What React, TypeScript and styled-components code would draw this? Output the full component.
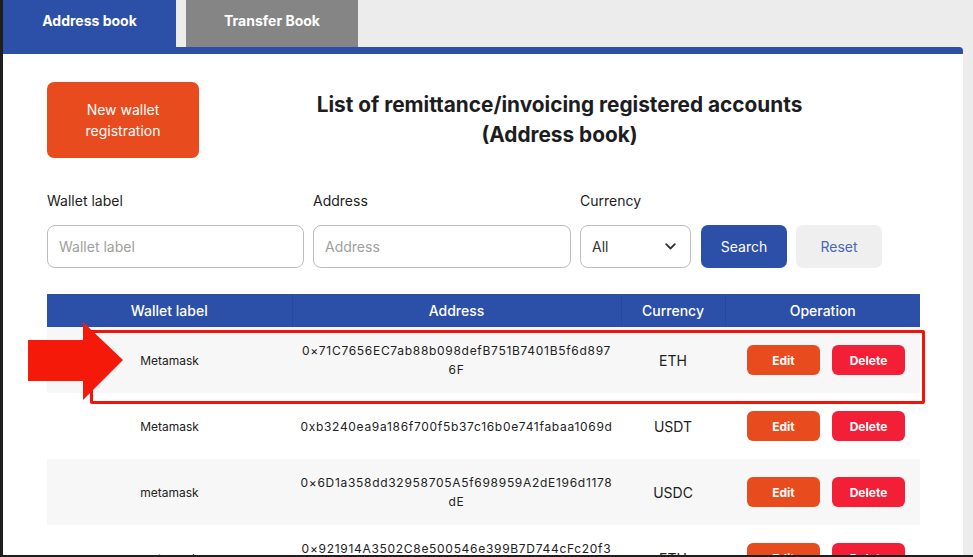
import React from "react";
import styled, { createGlobalStyle } from "styled-components";

const GlobalStyle = createGlobalStyle`
  html, body { margin: 0; padding: 0; background: #1e1e1e; }
  body { font-family: Inter, "Noto Sans", sans-serif; }
  * { box-sizing: border-box; }
`;

const Screen = styled.div`
  position: relative;
  margin-left: 3px;
  width: 970px;
  height: 555px;
  overflow: hidden;
  background: #ececec;
  font-family: Inter, "Noto Sans", sans-serif;
`;

const TabBar = styled.div`
  display: flex;
  gap: 10px;
  height: 47px;
`;

const Tab = styled.div<{ $active?: boolean }>`
  width: ${(p) => (p.$active ? 173 : 172)}px;
  display: flex;
  align-items: center;
  justify-content: center;
  padding-bottom: 6px;
  background: ${(p) => (p.$active ? "#2c4fa8" : "#858585")};
  color: #fff;
  font-weight: 700;
  font-size: 14px;
`;

const Panel = styled.div`
  width: 960px;
  height: 508px;
  background: #fff;
  border-top: 7px solid #2c4fa8;
  border-top-right-radius: 4px;
  padding: 28px 43px 0 44px;
`;

const TopRow = styled.div`
  display: flex;
  align-items: center;
`;

const NewWalletButton = styled.button`
  width: 152px;
  height: 76px;
  border: none;
  border-radius: 7px;
  background: #e84c1e;
  color: #fff;
  font-family: inherit;
  font-size: 14px;
  line-height: 21px;
  padding: 0 20px;
`;

const Title = styled.h1`
  flex: 1;
  margin: 0;
  text-align: center;
  font-size: 20.8px;
  line-height: 30px;
  font-weight: 700;
  color: #1d1d1f;
`;

const Filters = styled.div`
  display: flex;
  align-items: flex-end;
  gap: 9px;
  margin-top: 33px;
`;

const Field = styled.div<{ $w: number }>`
  display: flex;
  flex-direction: column;
  width: ${(p) => p.$w}px;
`;

const Label = styled.label`
  font-size: 14px;
  line-height: 20px;
  color: #222;
  margin-bottom: 14px;
`;

const TextInput = styled.input`
  height: 43px;
  border: 1px solid #bdbdbd;
  border-radius: 8px;
  padding: 0 11px;
  font-family: inherit;
  font-size: 14px;
  color: #333;
  outline: none;
  &::placeholder { color: #a0a0a0; }
`;

const SelectBox = styled.div`
  height: 43px;
  border: 1px solid #bdbdbd;
  border-radius: 8px;
  padding: 0 14px 0 11px;
  display: flex;
  align-items: center;
  justify-content: space-between;
  font-size: 14px;
  color: #333;
`;

const ActionButton = styled.button<{ $variant: "primary" | "ghost" }>`
  width: 86px;
  height: 43px;
  border: none;
  border-radius: 7px;
  font-family: inherit;
  font-size: 14px;
  margin-left: ${(p) => (p.$variant === "primary" ? 1 : 0)}px;
  background: ${(p) => (p.$variant === "primary" ? "#2c4fa8" : "#efefef")};
  color: ${(p) => (p.$variant === "primary" ? "#fff" : "#4a68b8")};
`;

const Table = styled.table`
  margin-top: 26px;
  width: 873px;
  border-collapse: collapse;
  table-layout: fixed;
`;

const Th = styled.th`
  height: 33px;
  padding: 0;
  background: #2c4fa8;
  color: #fff;
  font-size: 14px;
  font-weight: 500;
  text-align: center;
  border-left: 1px solid rgba(0, 0, 0, 0.08);
  &:first-child { border-left: none; }
`;

const Tr = styled.tr<{ $striped?: boolean }>`
  background: ${(p) => (p.$striped ? "#f7f7f7" : "#fff")};
`;

const Td = styled.td<{ $size?: number; $padX?: number }>`
  height: 66px;
  padding: 14px ${(p) => p.$padX ?? 8}px;
  text-align: center;
  vertical-align: middle;
  font-size: ${(p) => p.$size ?? 12}px;
  color: #222;
`;

const AddressText = styled.span`
  display: block;
  font-size: 12px;
  line-height: 19px;
  letter-spacing: 0.7px;
  word-break: break-all;
  color: #222;
`;

const OpCell = styled.div`
  display: flex;
  justify-content: center;
  gap: 12px;
  padding-left: 7px;
`;

const SmallButton = styled.button<{ $danger?: boolean }>`
  width: 73px;
  height: 30px;
  border: none;
  border-radius: 6px;
  background: ${(p) => (p.$danger ? "#f31f37" : "#e84c1e")};
  color: #fff;
  font-family: inherit;
  font-size: 12px;
  font-weight: 700;
`;

const Highlight = styled.div`
  position: absolute;
  left: 87px;
  top: 330px;
  width: 835px;
  height: 74px;
  border: 3px solid #f0140a;
  border-radius: 2px;
  pointer-events: none;
`;

const Arrow = styled.svg`
  position: absolute;
  left: 22px;
  top: 322px;
`;

const rows = [
  { label: "Metamask", address: "0×71C7656EC7ab88b098defB751B7401B5f6d8976F", cur: "ETH" },
  { label: "Metamask", address: "0xb3240ea9a186f700f5b37c16b0e741fabaa1069d", cur: "USDT" },
  { label: "metamask", address: "0×6D1a358dd32958705A5f698959A2dE196d1178dE", cur: "USDC" },
  { label: "metamask", address: "0×921914A3502C8e500546e399B7D744cFc20f3A9b", cur: "ETH" },
];

export default function App() {
  return (
    <Screen>
      <GlobalStyle />
      <TabBar>
        <Tab $active>Address book</Tab>
        <Tab>Transfer Book</Tab>
      </TabBar>
      <Panel>
        <TopRow>
          <NewWalletButton>New wallet registration</NewWalletButton>
          <Title>
            List of remittance/invoicing registered accounts
            <br />
            (Address book)
          </Title>
        </TopRow>
        <Filters>
          <Field $w={257}>
            <Label>Wallet label</Label>
            <TextInput placeholder="Wallet label" />
          </Field>
          <Field $w={258}>
            <Label>Address</Label>
            <TextInput placeholder="Address" />
          </Field>
          <Field $w={111}>
            <Label>Currency</Label>
            <SelectBox>
              <span>All</span>
              <svg width="11" height="7" viewBox="0 0 11 7" fill="none">
                <path d="M1.2 1.2 L5.5 5.5 L9.8 1.2" stroke="#333" strokeWidth="1.8" strokeLinecap="round" strokeLinejoin="round" />
              </svg>
            </SelectBox>
          </Field>
          <ActionButton $variant="primary">Search</ActionButton>
          <ActionButton $variant="ghost">Reset</ActionButton>
        </Filters>
        <Table>
          <colgroup>
            <col style={{ width: 245 }} />
            <col style={{ width: 329 }} />
            <col style={{ width: 104 }} />
            <col style={{ width: 195 }} />
          </colgroup>
          <thead>
            <tr>
              <Th>Wallet label</Th>
              <Th>Address</Th>
              <Th>Currency</Th>
              <Th>Operation</Th>
            </tr>
          </thead>
          <tbody>
            {rows.map((r, i) => (
              <Tr key={i} $striped={i % 2 === 0}>
                <Td>{r.label}</Td>
                <Td $padX={7}>
                  <AddressText>{r.address}</AddressText>
                </Td>
                <Td $size={14}>{r.cur}</Td>
                <Td>
                  <OpCell>
                    <SmallButton>Edit</SmallButton>
                    <SmallButton $danger>Delete</SmallButton>
                  </OpCell>
                </Td>
              </Tr>
            ))}
          </tbody>
        </Table>
      </Panel>
      <Highlight />
      <Arrow width="100" height="80" viewBox="0 0 100 80">
        <path d="M3 18 H58 V0 L98 38 L58 78 V59 H3 Z" fill="#f5190a" strokeLinejoin="round" />
      </Arrow>
    </Screen>
  );
}
